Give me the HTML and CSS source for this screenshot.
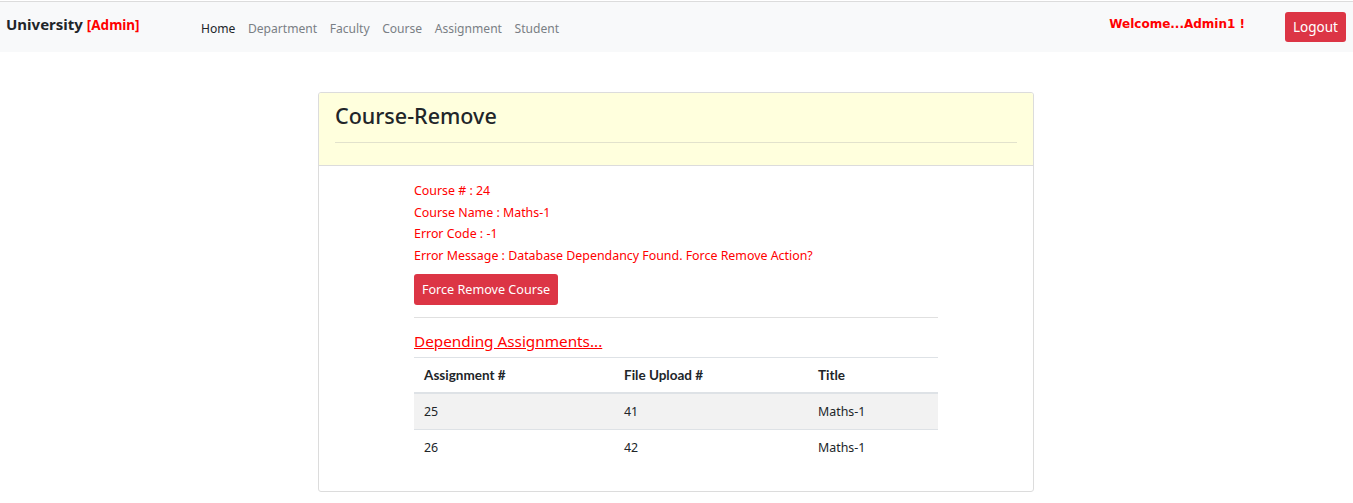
FILE: index.html
```html
<!DOCTYPE html>
<html>
<head>
<meta charset="utf-8">
<link rel="stylesheet" href="styles.css">
</head>
<body>
<nav class="navbar">
  <div class="brand">University <span class="role">[Admin]</span></div>
  <ul class="nav-links">
    <li><a class="active" href="#">Home</a></li>
    <li><a href="#">Department</a></li>
    <li><a href="#">Faculty</a></li>
    <li><a href="#">Course</a></li>
    <li><a href="#">Assignment</a></li>
    <li><a href="#">Student</a></li>
  </ul>
  <div class="welcome">Welcome...Admin1 !</div>
  <button class="btn btn-danger logout">Logout</button>
</nav>
<main class="main">
  <section class="card">
    <header class="card-header">
      <h2 class="card-title">Course-Remove</h2>
      <hr class="header-rule">
    </header>
    <div class="card-body">
      <div class="content">
        <p class="err">Course # : 24</p>
        <p class="err">Course Name : Maths-1</p>
        <p class="err">Error Code : -1</p>
        <p class="err">Error Message : Database Dependancy Found. Force Remove Action?</p>
        <button class="btn btn-danger force">Force Remove Course</button>
        <hr class="rule">
        <h4 class="dep-title">Depending Assignments...</h4>
        <table class="table">
          <thead>
            <tr><th class="c1">Assignment #</th><th class="c2">File Upload #</th><th>Title</th></tr>
          </thead>
          <tbody>
            <tr class="striped"><td>25</td><td>41</td><td>Maths-1</td></tr>
            <tr><td>26</td><td>42</td><td>Maths-1</td></tr>
          </tbody>
        </table>
      </div>
    </div>
  </section>
</main>
</body>
</html>
```
FILE: styles.css
```css
* { box-sizing: border-box; }
html, body { margin: 0; padding: 0; }
body {
  font-family: "Noto Sans", "Open Sans", sans-serif;
  font-size: 12.4px;
  color: #212529;
  background: #fff;
  padding-top: 1px;
}
.navbar {
  display: flex;
  align-items: center;
  height: 51px;
  background: #f8f9fa;
  border-top: 1px solid #dcdcdc;
  padding: 0 7px 0 6px;
}
.brand {
  font-weight: 700;
  font-size: 15px;
  color: #212529;
  width: 195px;
  margin-top: -6px;
}
.role { color: #ff0000; font-size: 13.5px; }
.nav-links {
  display: flex;
  list-style: none;
  margin: 2px 0 0;
  padding: 0;
  gap: 12.5px;
  flex: 1;
}
.nav-links a {
  text-decoration: none;
  color: #7a7f85;
  font-size: 12.1px;
}
.nav-links a.active { color: #212529; }
.welcome {
  color: #ff0000;
  font-family: "DejaVu Sans", sans-serif;
  font-weight: 700;
  font-size: 12px;
  margin-right: 40px;
  margin-top: -6px;
}
.btn {
  font-family: inherit;
  border: none;
  border-radius: 3px;
  color: #fff;
  cursor: pointer;
}
.btn-danger { background: #dc3545; }
.logout {
  width: 61px;
  height: 30px;
  font-size: 13.5px;
  padding: 0;
  margin-top: 0;
}
.main {
  padding-top: 40px;
  padding-right: 1px;
  display: flex;
  justify-content: center;
}
.card {
  width: 716px;
  border: 1px solid #dcdcdc;
  border-radius: 3px;
  overflow: hidden;
}
.card-header {
  background: #ffffdd;
  border-bottom: 1px solid #dcdcdc;
  padding: 9px 16px 22px;
}
.card-title {
  margin: 0;
  font-weight: 500;
  font-size: 21.5px;
  line-height: 28px;
}
.header-rule {
  margin: 12px 0 0;
  border: 0;
  border-top: 1px solid #e2e2cc;
}
.card-body {
  padding: 14px 95px 26px;
}
.err {
  margin: 0;
  color: #ff0000;
  font-size: 12.4px;
  line-height: 21.5px;
}
.force {
  margin-top: 8px;
  width: 144px;
  height: 31px;
  font-size: 12.6px;
  padding: 0;
}
.rule {
  margin: 12px 0 0;
  border: 0;
  border-top: 1px solid #e0e0e0;
}
.dep-title {
  margin: 12px 0 5px;
  font-weight: 400;
  font-size: 15.3px;
  line-height: 22px;
  color: #ff0000;
  text-decoration: underline;
}
.table {
  width: 100%;
  border-collapse: collapse;
  border-top: 1px solid #dee2e6;
}
.table th, .table td {
  text-align: left;
  padding: 9px 10px;
  line-height: 17px;
  font-size: 12.4px;
}
.table th {
  font-family: "Lato", "Noto Sans", sans-serif;
  font-size: 13.5px;
  font-weight: 700;
  border-bottom: 2px solid #dee2e6;
  padding: 9px 10px 8px;
}
.table td { border-bottom: 1px solid #dee2e6; }
.table tbody tr:last-child td { border-bottom: none; }
.c1 { width: 200px; }
.c2 { width: 194px; }
.striped { background: #f2f2f2; }
```
